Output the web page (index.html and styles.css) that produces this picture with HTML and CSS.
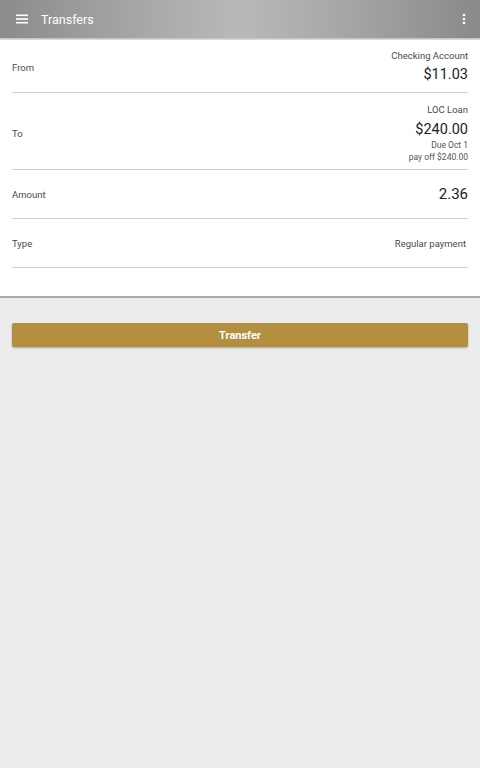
FILE: index.html
```html
<!DOCTYPE html>
<html>
<head>
<meta charset="utf-8">
<link rel="stylesheet" href="styles.css">
</head>
<body>
<header class="appbar">
  <svg class="menu" width="12" height="10" viewBox="0 0 12 10"><rect x="0" y="0.5" width="12" height="1.6" fill="#fff"/><rect x="0" y="4.2" width="12" height="1.6" fill="#fff"/><rect x="0" y="7.9" width="12" height="1.6" fill="#fff"/></svg>
  <span class="title">Transfers</span>
  <svg class="more" width="4" height="12" viewBox="0 0 4 12"><circle cx="2" cy="2" r="1.3" fill="#fff"/><circle cx="2" cy="6" r="1.3" fill="#fff"/><circle cx="2" cy="10" r="1.3" fill="#fff"/></svg>
</header>
<main>
  <section class="panel">
    <div class="row row-from">
      <span class="label">From</span>
      <div class="value">
        <div class="name">Checking Account</div>
        <div class="money">$11.03</div>
      </div>
    </div>
    <div class="row row-to">
      <span class="label">To</span>
      <div class="value">
        <div class="name">LOC Loan</div>
        <div class="money">$240.00</div>
        <div class="note">Due Oct 1</div>
        <div class="note">pay off $240.00</div>
      </div>
    </div>
    <div class="row row-amount">
      <span class="label">Amount</span>
      <span class="amount">2.36</span>
    </div>
    <div class="row row-type">
      <span class="label">Type</span>
      <span class="type">Regular payment</span>
    </div>
  </section>
  <div class="actions">
    <button class="btn">Transfer</button>
  </div>
</main>
</body>
</html>
```
FILE: styles.css
```css
html, body {
  margin: 0;
  padding: 0;
}
body {
  width: 480px;
  height: 768px;
  background: #ececec;
  font-family: Roboto, "Liberation Sans", sans-serif;
  overflow: hidden;
}
.appbar {
  height: 38px;
  display: flex;
  align-items: center;
  padding: 0 14px 0 16px;
  background: linear-gradient(90deg, #8b8b8b 0%, #a8a8a8 30%, #b9b9b9 50%, #a6a6a6 72%, #898989 100%);
  box-shadow: 0 1px 2px rgba(0,0,0,0.25);
  position: relative;
  z-index: 2;
}
.menu {
  display: block;
}
.title {
  color: #fff;
  font-size: 12.5px;
  margin-left: 13px;
  flex: 1;
}
.more {
  display: block;
}
.panel {
  background: #fff;
  margin-top: 2px;
  padding: 0 12px 28px;
  border-bottom: 2px solid #a9a9a9;
}
.row {
  display: flex;
  justify-content: space-between;
  align-items: center;
  border-bottom: 1px solid #cfcfcf;
}
.label {
  font-size: 9.5px;
  color: #4a4a4a;
}
.value {
  text-align: right;
}
.name {
  font-size: 9.5px;
  line-height: 12px;
  color: #4a4a4a;
}
.money {
  font-size: 14.5px;
  line-height: 18px;
  margin-top: 4px;
  color: #222;
}
.note {
  font-size: 8.5px;
  line-height: 12px;
  color: #555;
}
.row-from {
  padding: 10px 0 8px;
}
.row-to {
  padding: 11px 0 6px;
}
.row-to .money {
  margin-top: 5px;
}
.row-to .money + .note {
  margin-top: 0;
}
.row-amount {
  height: 48px;
}
.amount {
  font-size: 15px;
  color: #222;
}
.row-type {
  height: 48px;
}
.type {
  font-size: 9.5px;
  color: #4a4a4a;
  margin-right: 2px;
}
.actions {
  padding: 25px 12px 0;
}
.btn {
  display: block;
  width: 100%;
  height: 24px;
  border: 0;
  border-radius: 2px;
  background: #b38f3f;
  color: #fff;
  font-family: Roboto, "Liberation Sans", sans-serif;
  font-weight: bold;
  font-size: 11px;
  box-shadow: 0 1px 2px rgba(0,0,0,0.3);
  padding: 0;
}
```
